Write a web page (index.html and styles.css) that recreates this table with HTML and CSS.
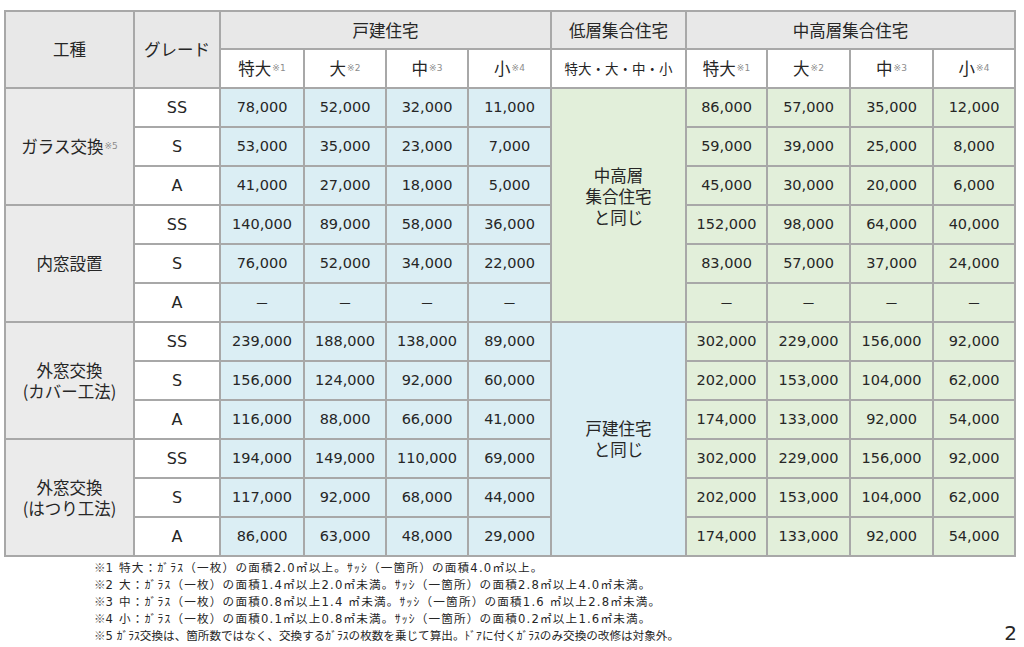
FILE: index.html
```html
<!DOCTYPE html>
<html lang="ja">
<head>
<meta charset="utf-8">
<link rel="stylesheet" href="styles.css">
</head>
<body>
<div class="page">
  <div class="grid">
    <div class="c hd rs2">工種</div>
    <div class="c hd rs2">グレード</div>
    <div class="c hd cs4">戸建住宅</div>
    <div class="c hd">低層集合住宅</div>
    <div class="c hd cs4">中高層集合住宅</div>

    <div class="c sub">特大<span class="note">※1</span></div>
    <div class="c sub">大<span class="note">※2</span></div>
    <div class="c sub">中<span class="note">※3</span></div>
    <div class="c sub">小<span class="note">※4</span></div>
    <div class="c sub small">特大・大・中・小</div>
    <div class="c sub">特大<span class="note">※1</span></div>
    <div class="c sub">大<span class="note">※2</span></div>
    <div class="c sub">中<span class="note">※3</span></div>
    <div class="c sub">小<span class="note">※4</span></div>

    <!-- ガラス交換 -->
    <div class="c grp rs3">ガラス交換<span class="note">※5</span></div>
    <div class="c gr">SS</div>
    <div class="c bl">78,000</div><div class="c bl">52,000</div><div class="c bl">32,000</div><div class="c bl">11,000</div>
    <div class="c gnm rs6 lift">中高層<br>集合住宅<br>と同じ</div>
    <div class="c gn">86,000</div><div class="c gn">57,000</div><div class="c gn">35,000</div><div class="c gn">12,000</div>

    <div class="c gr">S</div>
    <div class="c bl">53,000</div><div class="c bl">35,000</div><div class="c bl">23,000</div><div class="c bl">7,000</div>
    <div class="c gn">59,000</div><div class="c gn">39,000</div><div class="c gn">25,000</div><div class="c gn">8,000</div>

    <div class="c gr">A</div>
    <div class="c bl">41,000</div><div class="c bl">27,000</div><div class="c bl">18,000</div><div class="c bl">5,000</div>
    <div class="c gn">45,000</div><div class="c gn">30,000</div><div class="c gn">20,000</div><div class="c gn">6,000</div>

    <!-- 内窓設置 -->
    <div class="c grp rs3">内窓設置</div>
    <div class="c gr">SS</div>
    <div class="c bl">140,000</div><div class="c bl">89,000</div><div class="c bl">58,000</div><div class="c bl">36,000</div>
    <div class="c gn">152,000</div><div class="c gn">98,000</div><div class="c gn">64,000</div><div class="c gn">40,000</div>

    <div class="c gr">S</div>
    <div class="c bl">76,000</div><div class="c bl">52,000</div><div class="c bl">34,000</div><div class="c bl">22,000</div>
    <div class="c gn">83,000</div><div class="c gn">57,000</div><div class="c gn">37,000</div><div class="c gn">24,000</div>

    <div class="c gr">A</div>
    <div class="c bl dash">－</div><div class="c bl dash">－</div><div class="c bl dash">－</div><div class="c bl dash">－</div>
    <div class="c gn dash">－</div><div class="c gn dash">－</div><div class="c gn dash">－</div><div class="c gn dash">－</div>

    <!-- 外窓交換 カバー -->
    <div class="c grp rs3 multi"><span class="ln">外窓交換</span><span class="ln">(カバー工法)</span></div>
    <div class="c gr">SS</div>
    <div class="c bl">239,000</div><div class="c bl">188,000</div><div class="c bl">138,000</div><div class="c bl">89,000</div>
    <div class="c blm rs6 multi"><span class="ln">戸建住宅</span><span class="ln">と同じ</span></div>
    <div class="c gn">302,000</div><div class="c gn">229,000</div><div class="c gn">156,000</div><div class="c gn">92,000</div>

    <div class="c gr">S</div>
    <div class="c bl">156,000</div><div class="c bl">124,000</div><div class="c bl">92,000</div><div class="c bl">60,000</div>
    <div class="c gn">202,000</div><div class="c gn">153,000</div><div class="c gn">104,000</div><div class="c gn">62,000</div>

    <div class="c gr">A</div>
    <div class="c bl">116,000</div><div class="c bl">88,000</div><div class="c bl">66,000</div><div class="c bl">41,000</div>
    <div class="c gn">174,000</div><div class="c gn">133,000</div><div class="c gn">92,000</div><div class="c gn">54,000</div>

    <!-- 外窓交換 はつり -->
    <div class="c grp rs3 multi"><span class="ln">外窓交換</span><span class="ln">(はつり工法)</span></div>
    <div class="c gr">SS</div>
    <div class="c bl">194,000</div><div class="c bl">149,000</div><div class="c bl">110,000</div><div class="c bl">69,000</div>
    <div class="c gn">302,000</div><div class="c gn">229,000</div><div class="c gn">156,000</div><div class="c gn">92,000</div>

    <div class="c gr">S</div>
    <div class="c bl">117,000</div><div class="c bl">92,000</div><div class="c bl">68,000</div><div class="c bl">44,000</div>
    <div class="c gn">202,000</div><div class="c gn">153,000</div><div class="c gn">104,000</div><div class="c gn">62,000</div>

    <div class="c gr">A</div>
    <div class="c bl">86,000</div><div class="c bl">63,000</div><div class="c bl">48,000</div><div class="c bl">29,000</div>
    <div class="c gn">174,000</div><div class="c gn">133,000</div><div class="c gn">92,000</div><div class="c gn">54,000</div>
  </div>

  <div class="foot">
    <div class="notes">
      <p class="wide"><span class="rm">※</span>1 特大：ｶﾞﾗｽ（一枚）の面積2.0㎡以上。ｻｯｼ（一箇所）の面積4.0㎡以上。</p>
      <p class="wide"><span class="rm">※</span>2 大：ｶﾞﾗｽ（一枚）の面積1.4㎡以上2.0㎡未満。ｻｯｼ（一箇所）の面積2.8㎡以上4.0㎡未満。</p>
      <p class="wide"><span class="rm">※</span>3 中：ｶﾞﾗｽ（一枚）の面積0.8㎡以上1.4 ㎡未満。ｻｯｼ（一箇所）の面積1.6 ㎡以上2.8㎡未満。</p>
      <p class="wide"><span class="rm">※</span>4 小：ｶﾞﾗｽ（一枚）の面積0.1㎡以上0.8㎡未満。ｻｯｼ（一箇所）の面積0.2㎡以上1.6㎡未満。</p>
      <p><span class="rm">※</span>5 ｶﾞﾗｽ交換は、箇所数ではなく、交換するｶﾞﾗｽの枚数を乗じて算出。ﾄﾞｱに付くｶﾞﾗｽのみ交換の改修は対象外。</p>
    </div>
    <div class="pgno">2</div>
  </div>
</div>
</body>
</html>
```

FILE: styles.css
```css
html, body {
  margin: 0;
  padding: 0;
  background: #ffffff;
}

body {
  font-family: "Noto Sans CJK JP", sans-serif;
  color: #262626;
}

.page {
  width: 1024px;
  height: 647px;
  box-sizing: border-box;
  padding: 10px 0 0 4px;
  overflow: hidden;
}

.grid {
  display: grid;
  grid-template-columns: 129px 86px 84px 82px 82px 83px 135px 81px 83px 83px 82px;
  grid-template-rows: 38px 39px repeat(12, 39px);
  width: max-content;
  border-left: 2px solid #a8a8a8;
  border-top: 2px solid #a8a8a8;
}

.c {
  box-sizing: border-box;
  border-right: 2px solid #a8a8a8;
  border-bottom: 2px solid #a8a8a8;
  display: flex;
  align-items: center;
  justify-content: center;
  text-align: center;
  font-size: 16.5px;
  line-height: 21px;
  white-space: nowrap;
}

.multi {
  flex-direction: column;
}

.multi .ln {
  display: block;
  height: 21px;
  line-height: 21px;
}

.rs2 { grid-row: span 2; }
.rs3 { grid-row: span 3; }
.rs6 { grid-row: span 6; }
.cs4 { grid-column: span 4; }

.hd {
  background: #e8e8e8;
}

.sub {
  background: #ffffff;
}

.sub.small {
  font-size: 13.5px;
}

.note {
  font-family: "DejaVu Sans", sans-serif;
  font-size: 9px;
  color: #8c8c8c;
  vertical-align: 6px;
  line-height: 1;
  margin-left: 1px;
}

.grp {
  background: #ebebeb;
}

.gr {
  background: #ffffff;
  font-family: "DejaVu Sans", sans-serif;
  font-size: 16px;
}

.bl, .gn {
  font-family: "DejaVu Sans", "Noto Sans CJK JP", sans-serif;
  font-size: 14.5px;
}

.bl, .blm {
  background: #dbeef4;
}

.gn, .gnm {
  background: #e2efda;
}

.dash {
  font-family: "Noto Sans CJK JP", sans-serif;
  font-size: 14px;
}

.lift {
  padding-bottom: 17px;
}

.foot {
  display: flex;
  justify-content: space-between;
  align-items: flex-start;
  width: 1013px;
}

.notes {
  margin: 2px 0 0 90px;
  font-family: "DejaVu Sans", "Noto Sans CJK JP", sans-serif;
  font-size: 11.6px;
  line-height: 16px;
  color: #262626;
}

.notes p {
  margin: 0;
  white-space: nowrap;
}

.notes p.wide {
  letter-spacing: 1.2px;
}

.notes .rm {
  font-family: "Noto Sans CJK JP", sans-serif;
  color: #555;
  letter-spacing: 0;
}

.pgno {
  margin-top: 64px;
  font-family: "DejaVu Sans", sans-serif;
  font-size: 20px;
  line-height: 24px;
  color: #262626;
}
```
